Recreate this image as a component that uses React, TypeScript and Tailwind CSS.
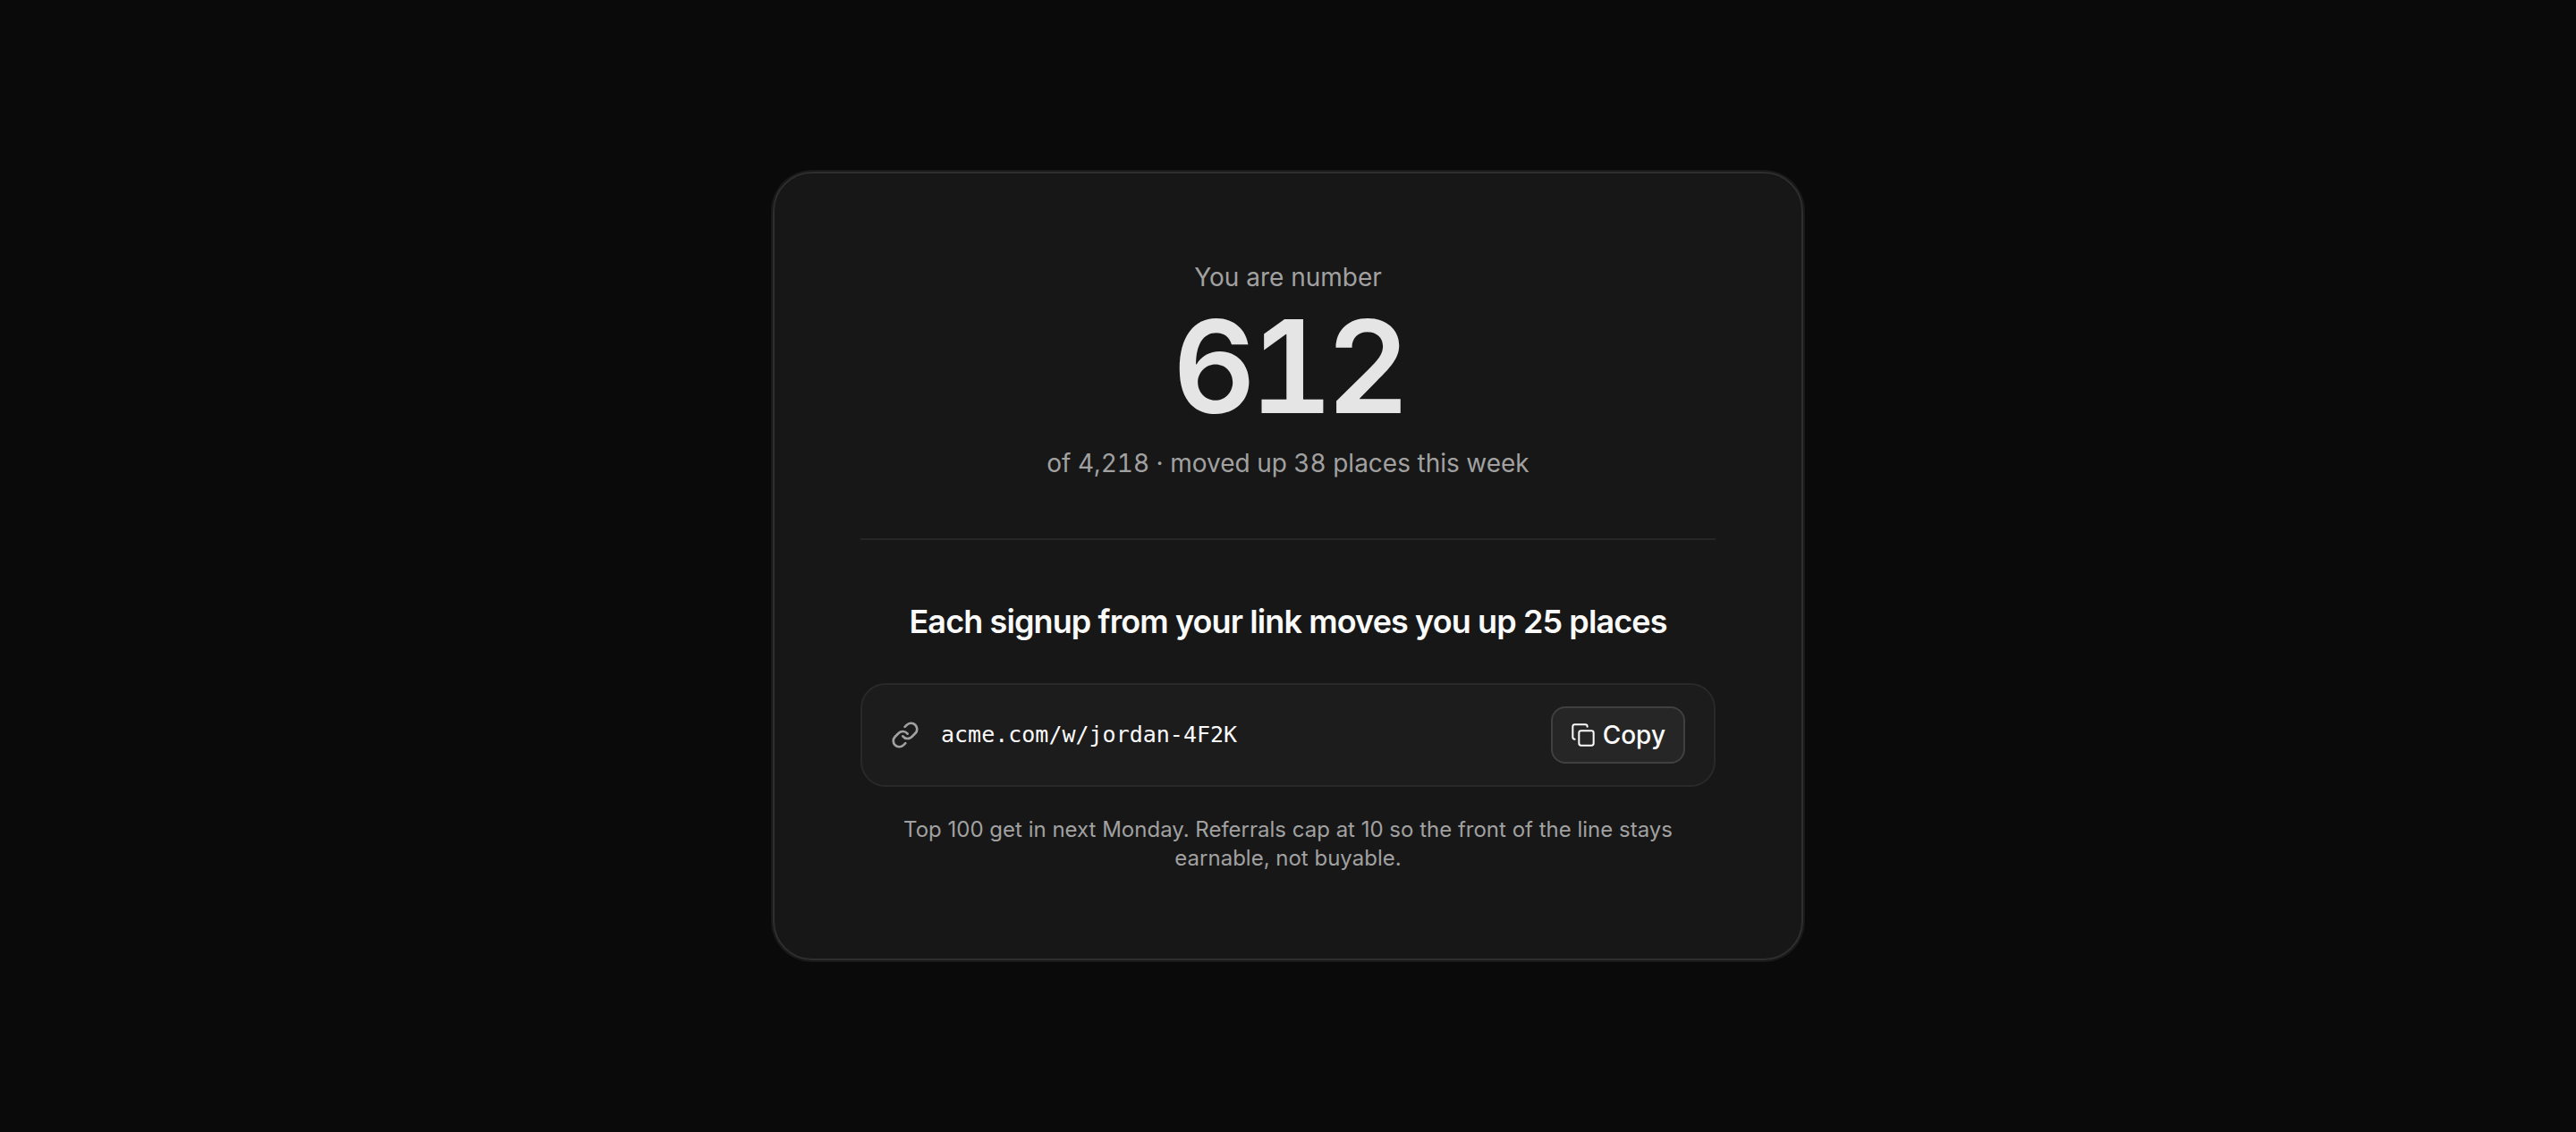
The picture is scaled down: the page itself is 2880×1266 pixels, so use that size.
import { Copy, Link } from "lucide-react";

export default function App() {
  return (
    <main className="flex min-h-screen items-center justify-center bg-[#0a0a0a] font-['Inter',sans-serif] text-[#fafafa]">
      <section className="w-full max-w-[1152px] rounded-[44px] border-2 border-[#2e2e2e] bg-[#171717] p-24 text-center ring-2 ring-[#191919]">
        <div className="border-b-2 border-[#262626] pb-16">
          <p className="text-[28px] leading-10 text-[#a1a1a1]">You are number</p>
          <p className="mt-2 text-[144px] leading-[144px] font-semibold tracking-tighter text-[#e5e5e5] tabular-nums">612</p>
          <p className="mt-4 text-[28px] leading-10 text-[#a1a1a1] tabular-nums">of 4,218 · moved up 38 places this week</p>
        </div>
        <h2 className="mt-16 text-[36px] leading-[54px] font-semibold tracking-tight">Each signup from your link moves you up 25 places</h2>
        <div className="mt-[42px] flex items-center gap-6 rounded-[28px] border-2 border-[#292929] bg-[#1c1c1c] px-8 py-6">
          <Link className="size-8 text-[#a1a1a1]" strokeWidth={2} />
          <span className="flex-1 text-left font-['DejaVu_Sans_Mono',monospace] text-[25px]">acme.com/w/jordan-4F2K</span>
          <button type="button" className="flex h-16 items-center gap-2 rounded-[16px] border-2 border-[#404040] bg-[#262626] px-5 text-[28px] font-medium">
            <Copy className="size-7" strokeWidth={1.75} />
            Copy
          </button>
        </div>
        <p className="mt-8 text-[24px] leading-8 text-[#a1a1a1]">Top 100 get in next Monday. Referrals cap at 10 so the front of the line stays earnable, not buyable.</p>
      </section>
    </main>
  );
}
